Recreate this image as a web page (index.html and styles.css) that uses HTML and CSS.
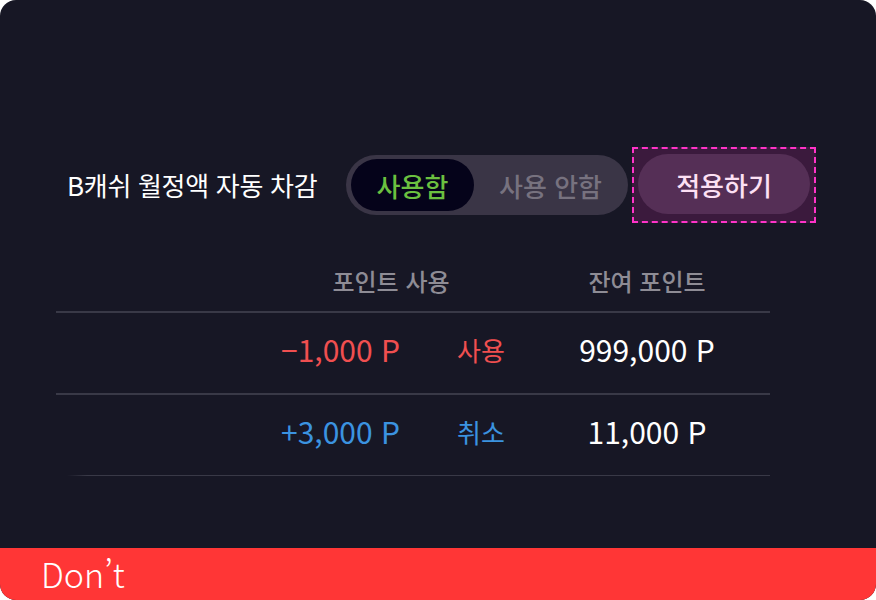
FILE: index.html
```html
<!DOCTYPE html>
<html lang="ko">
<head>
<meta charset="utf-8">
<link rel="stylesheet" href="styles.css">
</head>
<body>
<div class="card">
  <div class="content">
    <div class="setting">
      <div class="label">B캐쉬 월정액 자동 차감</div>
      <div class="toggle">
        <div class="opt active">사용함</div>
        <div class="opt">사용 안함</div>
      </div>
      <div class="highlight">
        <button class="apply">적용하기</button>
      </div>
    </div>
    <div class="table">
      <div class="thead">
        <div class="th th-use">포인트 사용</div>
        <div class="th th-rest">잔여 포인트</div>
      </div>
      <div class="row">
        <div class="amount minus">−1,000 P</div>
        <div class="kind minus">사용</div>
        <div class="rest">999,000 P</div>
      </div>
      <div class="row last">
        <div class="amount plus">+3,000 P</div>
        <div class="kind plus">취소</div>
        <div class="rest">11,000 P</div>
      </div>
      <div class="divider"></div>
    </div>
  </div>
  <div class="footer">Don’t</div>
</div>
</body>
</html>
```

FILE: styles.css
```css
* { box-sizing: border-box; }
html, body { margin: 0; padding: 0; background: #ffffff; }
body { font-family: "Noto Sans CJK KR", "Noto Sans", sans-serif; }

.card {
  width: 876px;
  height: 600px;
  background: #171725;
  border-radius: 16px;
  overflow: hidden;
  display: flex;
  flex-direction: column;
}
.content { flex: 1; padding-top: 147px; }

.setting {
  display: flex;
  align-items: center;
  padding-left: 67px;
}
.label {
  width: 279px;
  color: #ffffff;
  font-size: 26px;
  line-height: 34px;
  white-space: nowrap;
  letter-spacing: -0.3px;
}
.toggle {
  width: 282px;
  height: 60px;
  border-radius: 30px;
  background: #3a3546;
  padding: 4px 5px;
  display: flex;
  align-items: center;
}
.opt {
  flex: 1;
  height: 52px;
  border-radius: 26px;
  display: flex;
  align-items: center;
  justify-content: center;
  font-size: 26px;
  color: #77727f;
  font-weight: 500;
  padding-left: 4px;
  white-space: nowrap;
}
.opt.active {
  flex: none;
  width: 123px;
  background: #05031a;
  color: #6bc040;
  padding-left: 0;
}
.highlight {
  margin-left: 4px;
  width: 184px;
  height: 76px;
  border: 2px dashed #ff33c8;
  background: #3b1a3d;
  padding: 5px 4px 7px;
}
.apply {
  width: 100%;
  height: 60px;
  border: 0;
  border-radius: 30px;
  background: #552f56;
  color: #fde0f4;
  font-family: inherit;
  font-size: 26px;
  font-weight: 500;
  padding: 0;
}

.table { margin-left: 56px; width: 714px; margin-top: 40px; }
.thead {
  display: flex;
  height: 50px;
  border-bottom: 2px solid #393947;
  color: #8e8c95;
  font-size: 24px;
  font-weight: 500;
  line-height: 36px;
}
.th { width: 200px; text-align: center; white-space: nowrap; }
.th-use { margin-left: 235px; }
.th-rest { margin-left: 56px; }

.row {
  display: flex;
  align-items: center;
  height: 82px;
  padding-bottom: 8px;
  border-bottom: 2px solid #393947;
}
.row.last { border-bottom: 0; height: 80px; }
.amount {
  width: 344px;
  text-align: right;
  font-size: 30px;
}
.kind {
  margin-left: 57px;
  width: 90px;
  font-size: 26px;
}
.rest {
  width: 200px;
  text-align: center;
  color: #ffffff;
  font-size: 30px;
}
.minus { color: #f04f50; }
.plus { color: #3b93e0; }
.divider {
  height: 1px;
  margin-left: 11px;
  background: linear-gradient(to right, rgba(57,57,71,0), #393947 20px);
}

.footer {
  height: 52px;
  background: #ff3636;
  color: #ffffff;
  font-size: 34px;
  font-weight: 300;
  line-height: 52px;
  padding-left: 41px;
}
```
